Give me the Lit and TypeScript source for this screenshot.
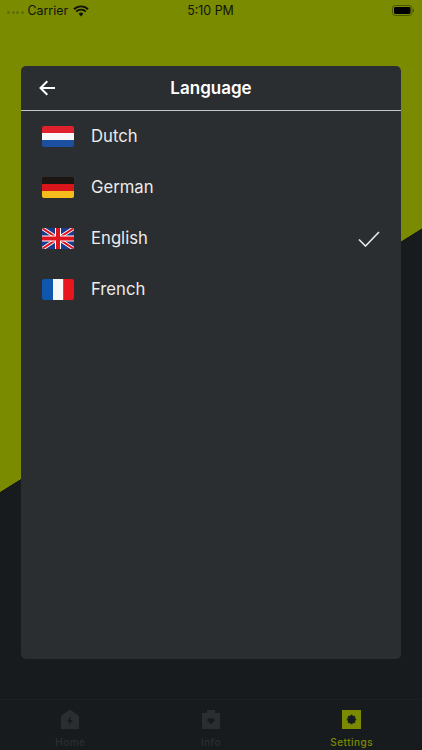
import { LitElement, html, css, svg } from 'lit';
import { customElement } from 'lit/decorators.js';

const languages = [
  { name: 'Dutch', flag: 'nl' },
  { name: 'German', flag: 'de' },
  { name: 'English', flag: 'gb', selected: true },
  { name: 'French', flag: 'fr' },
];

const flagArt: Record<string, unknown> = {
  nl: svg`<rect width="32" height="7" fill="#e0202c"/><rect y="7" width="32" height="7" fill="#f7f7f7"/><rect y="14" width="32" height="7" fill="#1c4f9f"/>`,
  de: svg`<rect width="32" height="7" fill="#1d1512"/><rect y="7" width="32" height="7" fill="#d8161c"/><rect y="14" width="32" height="7" fill="#f5bd1c"/>`,
  gb: svg`<rect width="32" height="21" fill="#1a3a8c"/>
    <path d="M0 0L32 21M32 0L0 21" stroke="#fff" stroke-width="3.800"/>
    <path d="M0 0L32 21M32 0L0 21" stroke="#e0141e" stroke-width="2"/>
    <path d="M16 0V21M0 10.500H32" stroke="#fff" stroke-width="6"/>
    <path d="M16 0V21M0 10.500H32" stroke="#e0141e" stroke-width="4"/>`,
  fr: svg`<rect width="11" height="21" fill="#0e57ad"/><rect x="11" width="10.500" height="21" fill="#f7f7f7"/><rect x="21.500" width="10.500" height="21" fill="#e8141e"/>`,
};

@customElement('app-root')
export class AppRoot extends LitElement {
  static styles = css`
    :host {
      display: flex;
      flex-direction: column;
      width: 422px;
      height: 750px;
      overflow: hidden;
      font-family: Inter, 'Noto Sans', sans-serif;
      background: linear-gradient(148deg, #7a8b00 417px, #171b1e 417.6px);
    }
    .status {
      display: grid;
      grid-template-columns: 1fr auto 1fr;
      align-items: center;
      height: 21px;
      padding: 0 8px 0 7px;
      font-size: 12.4px;
      color: #10140a;
    }
    .status-left, .status-right {
      display: flex;
      align-items: center;
    }
    .status-right {
      justify-content: flex-end;
    }
    .dots {
      display: flex;
      gap: 1.5px;
      margin: 4px 4px 0 0;
    }
    .dots i {
      width: 3px;
      height: 3px;
      border-radius: 50%;
      background: #5f6e0a;
    }
    .wifi {
      margin-left: 5px;
    }
    .panel {
      display: flex;
      flex-direction: column;
      width: 380px;
      height: 593px;
      margin: 45px 0 0 21px;
      border-radius: 5px;
      background: #2b2e31;
    }
    .head {
      display: grid;
      grid-template-columns: 52px 1fr 52px;
      align-items: center;
      height: 44px;
      border-bottom: 1px solid #c4c5c6;
      color: #fff;
    }
    .back {
      display: block;
      margin-left: 18px;
    }
    .title {
      text-align: center;
      font-size: 17px;
      font-weight: 600;
    }
    .row {
      display: flex;
      align-items: center;
      height: 51px;
      padding: 0 21px;
      color: #ebebeb;
      font-size: 16.7px;
    }
    .flag {
      display: block;
      margin-right: 17px;
      border-radius: 2px;
    }
    .name {
      flex: 1;
      margin-bottom: 2px;
    }
    .tabs {
      display: grid;
      grid-template-columns: repeat(3, 1fr);
      height: 50px;
      margin-top: 40px;
      border-top: 1px solid #1c2023;
    }
    .tab {
      display: flex;
      flex-direction: column;
      align-items: center;
      padding-top: 10px;
      font-size: 10px;
      font-weight: 500;
      letter-spacing: 0.5px;
      color: #2b2e31;
    }
    .tab svg {
      display: block;
      margin-bottom: 7px;
    }
    .tab.on {
      color: #7a8b00;
    }
  `;

  render() {
    return html`
      <div class="status">
        <div class="status-left">
          <div class="dots"><i></i><i></i><i></i><i></i></div>
          <span>Carrier</span>
          <svg class="wifi" width="16" height="12" viewBox="0 0 16 12">
            <path d="M8 11.500L5.600 8.700a3.400 3.400 0 0 1 4.800 0z" fill="#10140a"/>
            <path d="M1 4.200a10 10 0 0 1 14 0M3.200 6.600a6.800 6.800 0 0 1 9.600 0" fill="none" stroke="#10140a" stroke-width="1.900"/>
          </svg>
        </div>
        <span>5:10 PM</span>
        <div class="status-right">
          <svg width="22" height="11" viewBox="0 0 22 11">
            <rect x="0.500" y="0.500" width="19.500" height="10" rx="2.800" fill="none" stroke="#4c5800"/>
            <rect x="2" y="2" width="16.500" height="7" rx="1.400" fill="#000"/>
            <rect x="20.800" y="3.800" width="1.200" height="3.400" rx="0.600" fill="#4c5800"/>
          </svg>
        </div>
      </div>

      <section class="panel">
        <div class="head">
          <svg class="back" width="16" height="16" viewBox="0 0 16 16">
            <path d="M16 8H2M8.300 1.200L1.500 8l6.800 6.800" fill="none" stroke="#fff" stroke-width="2"/>
          </svg>
          <div class="title">Language</div>
          <span></span>
        </div>
        ${languages.map(lang => html`
          <div class="row">
            <svg class="flag" width="32" height="21" viewBox="0 0 32 21">${flagArt[lang.flag]}</svg>
            <span class="name">${lang.name}</span>
            ${lang.selected ? html`
              <svg width="22" height="16" viewBox="0 0 22 16">
                <path d="M1 8.500L7.500 15L21 1" fill="none" stroke="#ebebeb" stroke-width="1.600"/>
              </svg>` : ''}
          </div>
        `)}
      </section>

      <nav class="tabs">
        <div class="tab">
          <svg width="18" height="19" viewBox="0 0 18 19">
            <path d="M7.500 0.600Q9 -0.300 10.500 0.600L18 6V19H0V6z" fill="#2b2e31"/>
            <path d="M10 6L6 11.500H8.600L7.600 15.500L12 10H9.400z" fill="#171b1e"/>
          </svg>
          <span>Home</span>
        </div>
        <div class="tab">
          <svg width="18" height="19" viewBox="0 0 18 19">
            <path d="M5 3V0H13V3H18V19H0V3z" fill="#2b2e31"/>
            <path d="M9 14.500L5.200 10.600A2.200 2.200 0 0 1 9 8.800A2.200 2.200 0 0 1 12.800 10.600z" fill="#171b1e"/>
          </svg>
          <span>Info</span>
        </div>
        <div class="tab on">
          <svg width="19" height="19" viewBox="0 0 19 19">
            <rect width="19" height="19" fill="#7a8b00"/>
            <circle cx="9.500" cy="9.500" r="3.500" fill="#171b1e"/>
            <path d="M9.500 4.800V14.200M4.800 9.500H14.200M6.200 6.200L12.800 12.800M12.800 6.200L6.200 12.800" stroke="#171b1e" stroke-width="2.200"/>
          </svg>
          <span>Settings</span>
        </div>
      </nav>
    `;
  }
}
